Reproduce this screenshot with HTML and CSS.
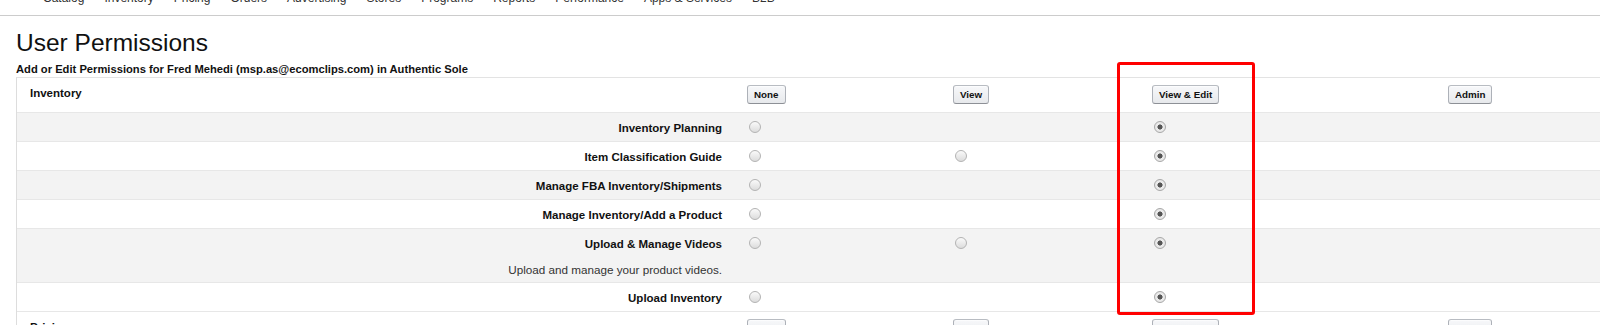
FILE: index.html
```html
<!DOCTYPE html>
<html lang="en">
<head>
<meta charset="utf-8">
<title>User Permissions</title>
<link rel="stylesheet" href="styles.css">
</head>
<body>
<nav class="topnav">
  <span class="nav-item">Catalog</span>
  <span class="nav-item">Inventory</span>
  <span class="nav-item">Pricing</span>
  <span class="nav-item">Orders</span>
  <span class="nav-item">Advertising</span>
  <span class="nav-item">Stores</span>
  <span class="nav-item">Programs</span>
  <span class="nav-item">Reports</span>
  <span class="nav-item">Performance</span>
  <span class="nav-item">Apps &amp; Services</span>
  <span class="nav-item">B2B</span>
</nav>

<main class="page">
  <h1 class="title">User Permissions</h1>
  <p class="subtitle">Add or Edit Permissions for Fred Mehedi (msp.as@ecomclips.com) in Authentic Sole</p>

  <div class="perm-table">
    <div class="row head">
      <div class="cell group-name">Inventory</div>
      <div class="cell col"><button class="btn">None</button></div>
      <div class="cell col"><button class="btn">View</button></div>
      <div class="cell col"><button class="btn">View &amp; Edit</button></div>
      <div class="cell col"><button class="btn">Admin</button></div>
    </div>

    <div class="row shade">
      <div class="cell label"><span class="line">Inventory Planning</span></div>
      <div class="cell col"><span class="line"><input type="radio" class="radio" name="r1"></span></div>
      <div class="cell col"></div>
      <div class="cell col"><span class="line"><input type="radio" class="radio" name="r1" checked></span></div>
      <div class="cell col"></div>
    </div>

    <div class="row">
      <div class="cell label"><span class="line">Item Classification Guide</span></div>
      <div class="cell col"><span class="line"><input type="radio" class="radio" name="r2"></span></div>
      <div class="cell col"><span class="line"><input type="radio" class="radio" name="r2"></span></div>
      <div class="cell col"><span class="line"><input type="radio" class="radio" name="r2" checked></span></div>
      <div class="cell col"></div>
    </div>

    <div class="row shade">
      <div class="cell label"><span class="line">Manage FBA Inventory/Shipments</span></div>
      <div class="cell col"><span class="line"><input type="radio" class="radio" name="r3"></span></div>
      <div class="cell col"></div>
      <div class="cell col"><span class="line"><input type="radio" class="radio" name="r3" checked></span></div>
      <div class="cell col"></div>
    </div>

    <div class="row">
      <div class="cell label"><span class="line">Manage Inventory/Add a Product</span></div>
      <div class="cell col"><span class="line"><input type="radio" class="radio" name="r4"></span></div>
      <div class="cell col"></div>
      <div class="cell col"><span class="line"><input type="radio" class="radio" name="r4" checked></span></div>
      <div class="cell col"></div>
    </div>

    <div class="row shade">
      <div class="cell label">
        <span class="line">Upload &amp; Manage Videos</span>
        <span class="desc">Upload and manage your product videos.</span>
      </div>
      <div class="cell col"><span class="line"><input type="radio" class="radio" name="r5"></span></div>
      <div class="cell col"><span class="line"><input type="radio" class="radio" name="r5"></span></div>
      <div class="cell col"><span class="line"><input type="radio" class="radio" name="r5" checked></span></div>
      <div class="cell col"></div>
    </div>

    <div class="row">
      <div class="cell label"><span class="line">Upload Inventory</span></div>
      <div class="cell col"><span class="line"><input type="radio" class="radio" name="r6"></span></div>
      <div class="cell col"></div>
      <div class="cell col"><span class="line"><input type="radio" class="radio" name="r6" checked></span></div>
      <div class="cell col"></div>
    </div>

    <div class="row head">
      <div class="cell group-name">Pricing</div>
      <div class="cell col"><button class="btn">None</button></div>
      <div class="cell col"><button class="btn">View</button></div>
      <div class="cell col"><button class="btn">View &amp; Edit</button></div>
      <div class="cell col"><button class="btn">Admin</button></div>
    </div>
  </div>
</main>

<div class="highlight"></div>
</body>
</html>
```

FILE: styles.css
```css
html, body {
  margin: 0;
  padding: 0;
  background: #fff;
  overflow: hidden;
}

body {
  font-family: "Liberation Sans", Arial, sans-serif;
  color: #111;
  position: relative;
  width: 1600px;
  height: 325px;
}

.topnav {
  height: 15px;
  border-bottom: 1px solid #cccccc;
  display: flex;
  gap: 20px;
  padding-left: 43px;
  overflow: hidden;
}

.nav-item {
  font-size: 12px;
  line-height: 14px;
  margin-top: -9px;
  color: #333;
  white-space: nowrap;
}

.page {
  padding-left: 16px;
}

.title {
  margin: 13px 0 0 0;
  font-size: 24.5px;
  line-height: 28px;
  font-weight: normal;
  color: #111;
}

.subtitle {
  margin: 5px 0 0 0;
  font-size: 11.2px;
  line-height: 14px;
  font-weight: bold;
  color: #111;
}

.perm-table {
  margin-top: 1px;
  border-top: 1px solid #e3e3e3;
  border-left: 1px solid #dddddd;
}

.row {
  display: grid;
  grid-template-columns: 730px 206px 199px 296px 1fr;
  border-bottom: 1px solid #e7e7e7;
  background: #fff;
}

.row.shade {
  background: #f3f3f3;
}

.row.head {
  height: 34px;
  align-items: start;
}

.cell {
  display: flex;
  flex-direction: column;
}

.col {
  align-items: flex-start;
}

.group-name {
  padding-left: 13px;
  font-size: 11.5px;
  font-weight: bold;
  line-height: 30px;
}

.head .col {
  padding-top: 7px;
}

.label {
  align-items: flex-end;
  padding-right: 25px;
  font-size: 11.5px;
  font-weight: bold;
}

.line {
  height: 28px;
  box-sizing: border-box;
  padding-top: 1px;
  display: flex;
  align-items: center;
}

.col .line {
  padding-left: 2px;
  padding-top: 0;
}

.desc {
  font-weight: normal;
  font-size: 11.7px;
  line-height: 16px;
  margin-top: 5px;
  padding-bottom: 4px;
  color: #333;
}

.btn {
  font-family: "Liberation Sans", Arial, sans-serif;
  font-size: 9.8px;
  font-weight: bold;
  color: #111;
  height: 19px;
  padding: 0 6px;
  margin: 0;
  border: 1px solid #adb1b8;
  border-top-color: #b8bcc2;
  border-bottom-color: #8d9096;
  border-radius: 3px;
  background: linear-gradient(to bottom, #f7f8fa, #e7e9ec);
  box-shadow: 0 1px 0 rgba(255, 255, 255, 0.6) inset;
  cursor: pointer;
}

.radio {
  appearance: none;
  -webkit-appearance: none;
  margin: 0;
  width: 12px;
  height: 12px;
  border-radius: 50%;
  border: 1px solid #b3b3b3;
  background: linear-gradient(to bottom, #fafafa, #dcdcdc);
  box-sizing: border-box;
  position: relative;
}

.radio:checked {
  background: radial-gradient(circle, #555 0, #555 2.2px, #ececec 2.9px, #e0e0e0 100%);
  border-color: #a8a8a8;
}

.highlight {
  position: absolute;
  left: 1117px;
  top: 62px;
  width: 138px;
  height: 253px;
  box-sizing: border-box;
  border: 3px solid #ff0000;
  border-radius: 3px;
  pointer-events: none;
}
```
